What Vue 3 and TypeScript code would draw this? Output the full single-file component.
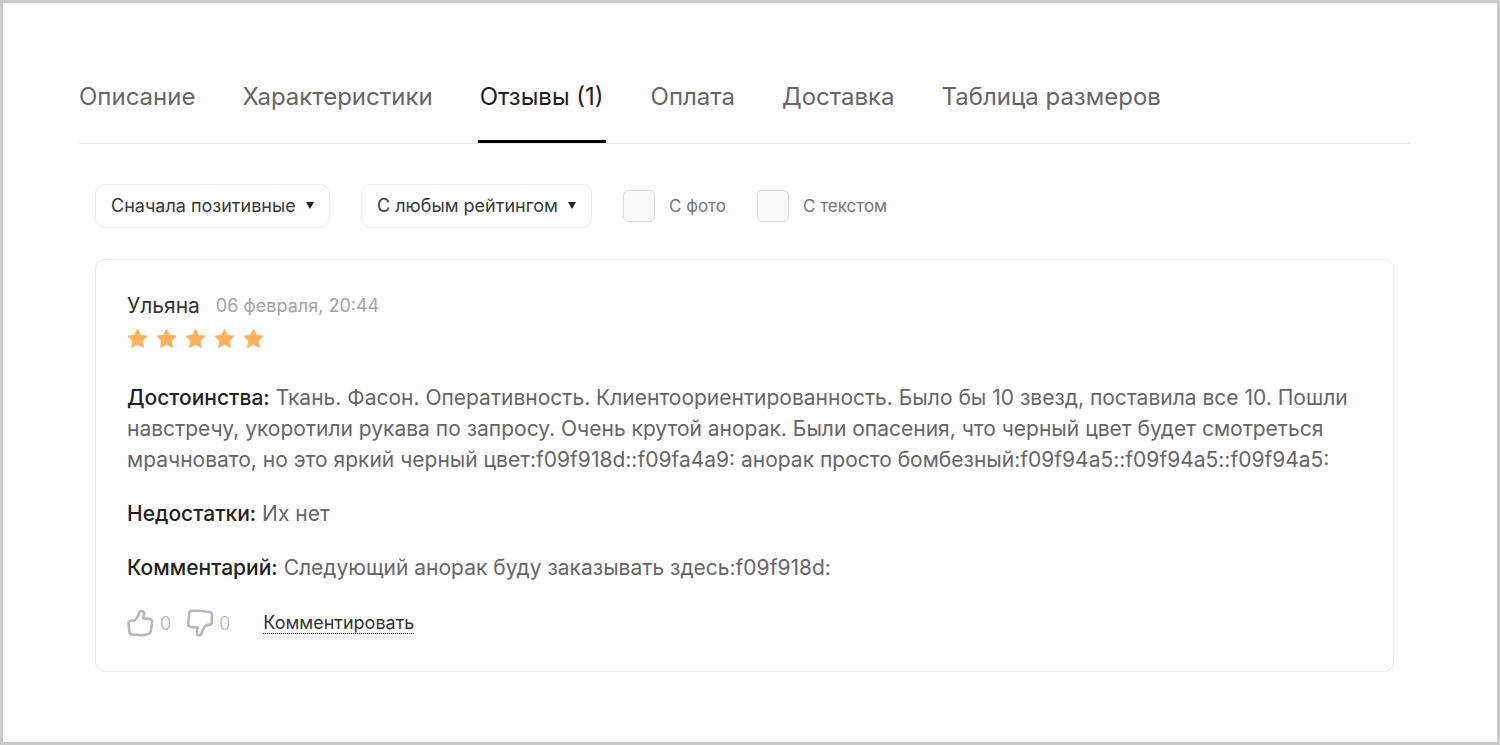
<script setup lang="ts">
import { ref } from 'vue'

interface Tab {
  id: string
  label: string
}

const tabs: Tab[] = [
  { id: 'description', label: 'Описание' },
  { id: 'specs', label: 'Характеристики' },
  { id: 'reviews', label: 'Отзывы (1)' },
  { id: 'payment', label: 'Оплата' },
  { id: 'delivery', label: 'Доставка' },
  { id: 'sizes', label: 'Таблица размеров' },
]

const activeTab = ref('reviews')
const sort = ref('Сначала позитивные')
const rating = ref('С любым рейтингом')
const withPhoto = ref(false)
const withText = ref(false)

const review = {
  author: 'Ульяна',
  date: '06 февраля, 20:44',
  stars: 5,
  likes: 0,
  dislikes: 0,
  sections: [
    {
      title: 'Достоинства:',
      text: 'Ткань. Фасон. Оперативность. Клиентоориентированность. Было бы 10 звезд, поставила все 10. Пошли навстречу, укоротили рукава по запросу. Очень крутой анорак. Были опасения, что черный цвет будет смотреться мрачновато, но это яркий черный цвет:f09f918d::f09fa4a9: анорак просто бомбезный:f09f94a5::f09f94a5::f09f94a5:',
    },
    { title: 'Недостатки:', text: 'Их нет' },
    { title: 'Комментарий:', text: 'Следующий анорак буду заказывать здесь:f09f918d:' },
  ],
}
</script>

<template>
  <main class="page">
    <nav class="tabs">
      <a
        v-for="tab in tabs"
        :key="tab.id"
        :href="'#' + tab.id"
        class="tab"
        :class="{ active: tab.id === activeTab }"
        @click.prevent="activeTab = tab.id"
      >{{ tab.label }}</a>
    </nav>

    <section class="reviews">
      <form class="filters">
        <div class="dropdown">
          <select v-model="sort" aria-label="Сортировка">
            <option>Сначала позитивные</option>
          </select>
          <svg class="arrow" viewBox="0 0 8 8" aria-hidden="true"><path d="M0 1h8L4 8z" /></svg>
        </div>
        <div class="dropdown">
          <select v-model="rating" aria-label="Рейтинг">
            <option>С любым рейтингом</option>
          </select>
          <svg class="arrow" viewBox="0 0 8 8" aria-hidden="true"><path d="M0 1h8L4 8z" /></svg>
        </div>
        <label class="check"><input v-model="withPhoto" type="checkbox" />С фото</label>
        <label class="check"><input v-model="withText" type="checkbox" />С текстом</label>
      </form>

      <article class="card">
        <header class="head">
          <span class="author">{{ review.author }}</span>
          <time class="date">{{ review.date }}</time>
        </header>
        <div class="stars" role="img" aria-label="5 из 5">
          <svg v-for="n in review.stars" :key="n" viewBox="0 0 22 21">
            <path d="M10.500 1.300 13.300 7.300 20 8.200 15.200 12.900 16.400 19.400 10.500 16.300 4.600 19.400 5.800 12.900 1 8.200 7.700 7.300z" />
          </svg>
        </div>

        <p v-for="s in review.sections" :key="s.title" class="text">
          <strong>{{ s.title }}</strong> {{ s.text }}
        </p>

        <footer class="actions">
          <button type="button" class="vote" aria-label="Нравится">
            <svg viewBox="0 0 28 28">
              <path d="M1.500 14.200Q1.500 12 3.700 12l3.500-.7q1.400-.5 2.200-2l2-3.300 1.100-2.700q.6-1.600 2.200-1.300 2.500.5 2.300 3.100l-.8 4.300 5.900.5q3.200.3 2.900 3.200l-1.100 8.800q-.4 2.700-2.900 3.100l-5.700 1.300-9.500-.8q-3.100 0-3.400-2.200z" />
            </svg>
            <span>{{ review.likes }}</span>
          </button>
          <button type="button" class="vote" aria-label="Не нравится">
            <svg viewBox="0 0 28 28">
              <path d="M6 1.700l8.600.1 5.600 1 3.400.2q2.300.2 2.300 2.200v8.200q0 2-2.300 2.300l-2.600.4q-1.400.3-2.100 1.400l-2.600 4.300-1.100 3.200q-.6 1.600-2 1.300-2.300-.5-2.300-2.900l.6-4.800-6.500-.6q-3-.4-2.700-3.300L3.200 4.500Q3.600 1.900 6 1.700z" />
            </svg>
            <span>{{ review.dislikes }}</span>
          </button>
          <button type="button" class="reply">Комментировать</button>
        </footer>
      </article>
    </section>
  </main>
</template>

<style>
body {
  background: #fefefe;
}
</style>

<style scoped>
.page {
  box-sizing: border-box;
  min-height: 100vh;
  padding: 72px 86px 68px 76px;
  border: 3px solid #cbcbcb;
  background: #fefefe;
  color: #333;
  font-family: Inter, sans-serif;
}
.tabs {
  display: flex;
  gap: 43px;
  border-bottom: 1px solid #ececec;
}
.tab {
  height: 65px;
  padding: 0 2px;
  border-bottom: 3px solid transparent;
  color: #666;
  font-size: 24px;
  font-weight: 400;
  line-height: 44px;
  text-decoration: none;
  white-space: nowrap;
}
.tab:first-child {
  padding-left: 0;
}
.tab.active {
  border-color: #000;
  border-radius: 2px 2px 0 0;
  color: #222;
}
.reviews {
  padding: 40px 17px 0 16px;
}
.filters {
  display: flex;
  align-items: center;
  gap: 31px;
}
.dropdown {
  position: relative;
}
select {
  height: 44px;
  padding: 0 33px 1px 15px;
  border: 1px solid #eee;
  border-radius: 10px;
  appearance: none;
  background: #fefefe;
  color: #3a3a3a;
  font: 400 18px Inter, sans-serif;
}
.arrow {
  position: absolute;
  top: 17px;
  right: 16px;
  width: 8px;
  height: 8px;
  fill: #222;
  pointer-events: none;
}
.check {
  display: flex;
  align-items: center;
  gap: 14px;
  color: #757575;
  font-size: 17px;
}
.check input {
  width: 32px;
  height: 32px;
  margin: 0;
  border: 1px solid #ddd;
  border-radius: 5px;
  appearance: none;
  background: #f8f8f8;
}
.check input:checked {
  background: #555;
}
.card {
  margin-top: 31px;
  padding: 32px 31px 31px;
  border: 1px solid #eee;
  border-radius: 10px;
}
.head {
  display: flex;
  align-items: center;
  gap: 16px;
  line-height: 28px;
}
.author {
  font-size: 21px;
}
.date {
  color: #a3a3a3;
  font-size: 18px;
}
.stars {
  display: flex;
  gap: 7px;
  margin-top: 8px;
}
.stars svg {
  width: 22px;
  height: 21px;
  fill: #ffb05c;
  stroke: #ffb05c;
  stroke-width: 1;
  stroke-linejoin: round;
}
.text {
  margin: 0 0 23px;
  color: #666;
  font-size: 21px;
  line-height: 31px;
}
.stars + .text {
  margin-top: 33px;
}
.text strong {
  color: #222;
  font-weight: 500;
}
.actions {
  display: flex;
  align-items: center;
  height: 34px;
}
.vote,
.reply {
  padding: 0;
  border: 0;
  background: none;
  font-family: Inter, sans-serif;
  font-size: 18px;
}
.vote {
  display: flex;
  align-items: center;
  gap: 5px;
  margin-right: 15px;
  color: #b0b0b0;
  font-weight: 300;
}
.vote svg {
  width: 28px;
  height: 28px;
  fill: none;
  stroke: #b8b8b8;
  stroke-width: 2.600;
  stroke-linejoin: round;
}
.reply {
  margin-left: 18px;
  border-bottom: 1px dotted #333;
  color: #333;
  line-height: 20px;
}
</style>
